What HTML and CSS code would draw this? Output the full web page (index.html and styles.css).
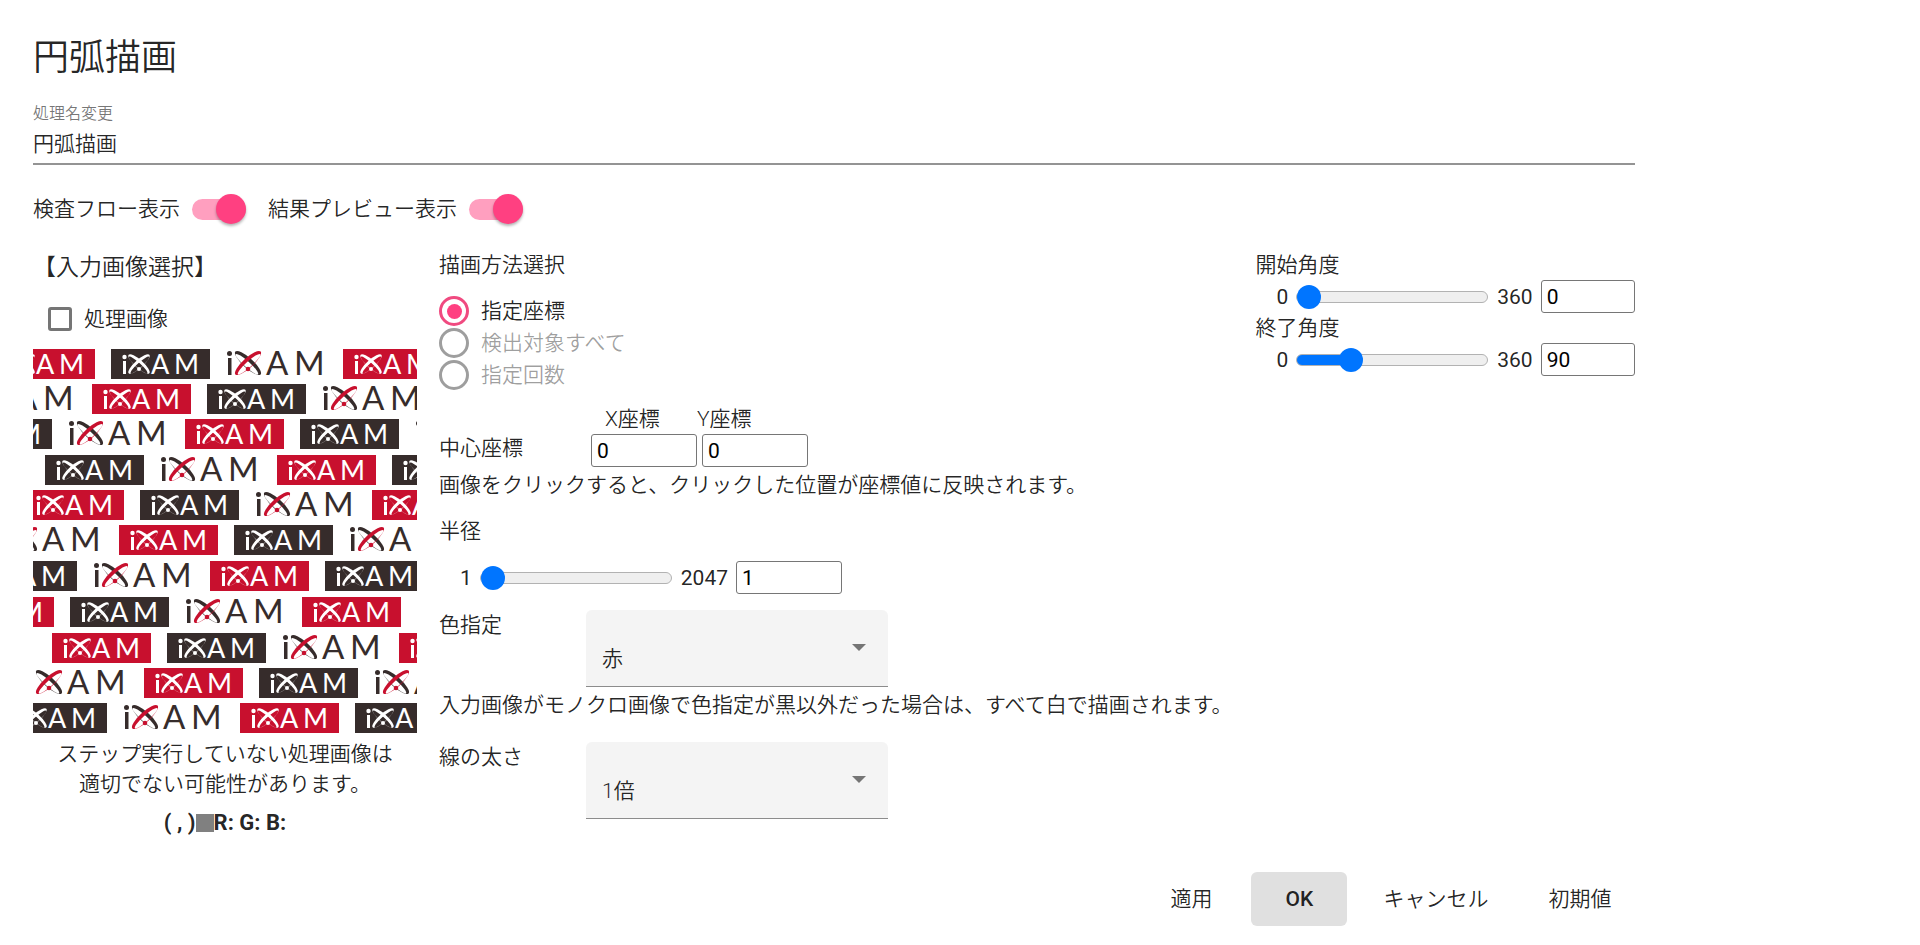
FILE: index.html
```
<!DOCTYPE html>
<html lang="ja">
<head>
    <meta charset="UTF-8">
    <meta name="viewport" content="width=device-width, initial-scale=1">
    <title>円弧描画</title>
    <link rel="stylesheet" href="styles.css">
</head>
<body>
    <main class="dialog">
        <h1 class="title">円弧描画</h1>

        <div class="name-field">
            <label for="process-name">処理名変更</label>
            <input type="text" id="process-name" value="円弧描画">
        </div>

        <div class="toggles">
            <label class="toggle">検査フロー表示<input type="checkbox" role="switch" checked></label>
            <label class="toggle">結果プレビュー表示<input type="checkbox" role="switch" checked></label>
        </div>

        <div class="columns">
            <!-- 入力画像 -->
            <section class="image-column">
                <h2>【入力画像選択】</h2>
                <label class="check"><input type="checkbox">処理画像</label>
                <svg class="preview" viewBox="0 0 384 384" role="img" aria-label="入力画像">
                    <defs>
                        <path id="orbit" fill-rule="evenodd" d="M-17 0a17 5 0 0 1 34 0a17 5 0 0 1 -34 0zM-15 1.6a15 2.9 0 0 0 30 0a15 2.9 0 0 0 -30 0z"/>
                        <g id="box-logo">
                            <circle cx="13.5" cy="8" r="2.2"/>
                            <path d="M12 12h3v13h-3z"/>
                            <use href="#orbit" transform="translate(28 15) rotate(42) scale(.82)"/>
                            <use href="#orbit" transform="translate(28 15) rotate(-42) scale(.82)"/>
                            <circle cx="28" cy="20" r="2"/>
                            <text class="logo-text" y="25" x="40 63" font-size="27">AM</text>
                        </g>
                        <g id="plain-logo" fill="#362c2b">
                            <circle cx="2.5" cy="4.5" r="2.5"/>
                            <path d="M1 9h3.5v17h-3.5z"/>
                            <use href="#orbit" transform="translate(21 14) rotate(42)"/>
                            <use href="#orbit" transform="translate(21 14) rotate(-42)" fill="#c8102e"/>
                            <circle cx="21" cy="20" r="2.3" fill="#c8102e"/>
                            <text class="logo-text" y="26" x="39 67" font-size="33">AM</text>
                        </g>
                        <g id="red-box"><rect width="99" height="30" fill="#c8102e"/><use href="#box-logo" fill="#fff"/></g>
                        <g id="dark-box"><rect width="99" height="30" fill="#362c2b"/><use href="#box-logo" fill="#fff"/></g>
                        <g id="strip">
                            <use href="#red-box"/>
                            <use href="#dark-box" x="115"/>
                            <use href="#plain-logo" x="231"/>
                            <use href="#red-box" x="347"/>
                            <use href="#dark-box" x="462"/>
                            <use href="#plain-logo" x="578"/>
                            <use href="#red-box" x="694"/>
                        </g>
                    </defs>
                    <use href="#strip" x="-37" y="0"/>
                    <use href="#strip" x="-288" y="35"/>
                    <use href="#strip" x="-195" y="70"/>
                    <use href="#strip" x="-103" y="106"/>
                    <use href="#strip" x="-8" y="141"/>
                    <use href="#strip" x="-261" y="176"/>
                    <use href="#strip" x="-170" y="212"/>
                    <use href="#strip" x="-78" y="248"/>
                    <use href="#strip" x="-328" y="284"/>
                    <use href="#strip" x="-236" y="319"/>
                    <use href="#strip" x="-140" y="354"/>
                </svg>
                <p class="caution">ステップ実行していない処理画像は<br>適切でない可能性があります。</p>
                <p class="pixel">( , )<span class="swatch"></span>R: G: B:</p>
            </section>

            <!-- 描画設定 -->
            <section class="draw-column">
                <fieldset class="method">
                    <legend>描画方法選択</legend>
                    <label class="radio"><input type="radio" name="method" checked>指定座標</label>
                    <label class="radio"><input type="radio" name="method" disabled>検出対象すべて</label>
                    <label class="radio"><input type="radio" name="method" disabled>指定回数</label>
                </fieldset>

                <div class="center">
                    <span class="row-name">中心座標</span>
                    <div class="coord">
                        <label for="center-x">X座標</label>
                        <input class="num" type="text" id="center-x" value="0">
                    </div>
                    <div class="coord">
                        <label for="center-y">Y座標</label>
                        <input class="num" type="text" id="center-y" value="0">
                    </div>
                </div>
                <p class="note">画像をクリックすると、クリックした位置が座標値に反映されます。</p>

                <label class="radius-name" for="radius">半径</label>
                <div class="slider-row radius">
                    <span>1</span>
                    <input type="range" id="radius" min="1" max="2047" value="1" style="--fill: 0%">
                    <span>2047</span>
                    <input class="num" type="text" value="1" aria-label="半径">
                </div>

                <div class="select-row">
                    <label for="color">色指定</label>
                    <div class="select">
                        <select id="color"><option>赤</option></select>
                    </div>
                </div>
                <p class="note">入力画像がモノクロ画像で色指定が黒以外だった場合は、すべて白で描画されます。</p>
                <div class="select-row line-width">
                    <label for="line-width">線の太さ</label>
                    <div class="select">
                        <select id="line-width"><option>1倍</option></select>
                    </div>
                </div>
            </section>

            <!-- 角度 -->
            <section class="angle-column">
                <label for="start-angle">開始角度</label>
                <div class="slider-row">
                    <span>0</span>
                    <input type="range" id="start-angle" min="0" max="360" value="0" style="--fill: 0%">
                    <span>360</span>
                    <input class="num" type="text" value="0" aria-label="開始角度">
                </div>
                <label for="end-angle">終了角度</label>
                <div class="slider-row">
                    <span>0</span>
                    <input type="range" id="end-angle" min="0" max="360" value="90" style="--fill: 25%">
                    <span>360</span>
                    <input class="num" type="text" value="90" aria-label="終了角度">
                </div>
            </section>
        </div>

        <div class="actions">
            <button type="button">適用</button>
            <button type="button" class="focused">OK</button>
            <button type="button">キャンセル</button>
            <button type="button">初期値</button>
        </div>
    </main>
</body>
</html>
```
FILE: styles.css
```
* {
    box-sizing: border-box;
}

body {
    margin: 0;
    background-color: #fff;
    color: rgba(0, 0, 0, 0.87);
    font-family: Roboto, "Noto Sans CJK JP", sans-serif;
    font-size: 21px;
    font-weight: 350;
    line-height: 30px;
}

input,
select,
button {
    margin: 0;
    color: inherit;
    font: inherit;
}

p,
h1,
h2 {
    margin: 0;
}

label {
    display: block;
}

.dialog {
    width: 87%;
    padding: 34px 35px 0 33px;
}

.title {
    font-size: 36px;
    font-weight: 350;
    line-height: 48px;
}

/* 処理名 */
.name-field {
    margin-top: 20px;
    border-bottom: 2px solid #949494;
}

.name-field label {
    color: rgba(0, 0, 0, 0.54);
    font-size: 16px;
    line-height: 24px;
}

.name-field input {
    display: block;
    width: 100%;
    height: 37px;
    padding: 0 0 6px;
    border: 0;
    outline: 0;
}

/* トグル */
.toggles {
    display: flex;
    gap: 22px;
    margin-top: 29px;
}

.toggle {
    display: flex;
    align-items: center;
    gap: 12px;
}

.toggle input {
    display: flex;
    align-items: center;
    justify-content: flex-end;
    width: 54px;
    height: 21px;
    border-radius: 11px;
    background-color: #ff9fbf;
    appearance: none;
}

.toggle input::before {
    content: "";
    width: 30px;
    height: 30px;
    border-radius: 50%;
    background-color: #ff4081;
    box-shadow: 0 2px 3px rgba(0, 0, 0, 0.3);
}

.columns {
    display: flex;
    align-items: flex-start;
    gap: 22px;
    margin-top: 26px;
}

/* 入力画像 */
.image-column {
    width: 384px;
}

.image-column h2 {
    font-size: 23px;
    font-weight: 350;
    line-height: 36px;
}

.check {
    display: flex;
    align-items: center;
    gap: 12px;
    margin: 18px 0 15px 15px;
}

.check input {
    width: 24px;
    height: 24px;
    border: 3px solid #757575;
    border-radius: 3px;
    appearance: none;
}

.preview {
    display: block;
    width: 100%;
    overflow: hidden;
}

.logo-text {
    font-family: Lato, sans-serif;
    font-weight: 400;
}

.caution {
    margin-top: 6px;
    text-align: center;
}

.pixel {
    display: flex;
    align-items: center;
    justify-content: center;
    margin-top: 9px;
    font-size: 22px;
    font-weight: 700;
}

.swatch {
    width: 18px;
    height: 18px;
    background-color: #808080;
}

/* 描画設定 */
.draw-column {
    flex: 1;
}

.method {
    margin: 0;
    padding: 0;
    border: 0;
}

.method legend {
    padding: 0;
    margin-bottom: 16px;
}

.radio {
    display: flex;
    align-items: center;
    gap: 12px;
    margin-bottom: 2px;
}

.radio input {
    display: grid;
    place-items: center;
    width: 30px;
    height: 30px;
    border: 3px solid #9e9e9e;
    border-radius: 50%;
    appearance: none;
}

.radio input:checked {
    border-color: #f04a80;
}

.radio input:checked::before {
    content: "";
    width: 15px;
    height: 15px;
    border-radius: 50%;
    background-color: #ff4081;
}

.radio:has(:disabled) {
    color: rgba(0, 0, 0, 0.38);
}

.num {
    width: 106px;
    height: 33px;
    padding: 0 5px;
    border: 1px solid #767676;
    border-radius: 3px;
    color: #000;
    font-weight: 400;
}

.center {
    display: flex;
    align-items: flex-end;
    gap: 5px;
    margin-top: 12px;
}

.row-name {
    width: 147px;
    margin-bottom: 4px;
}

.coord:not(:last-child) label {
    padding-left: 14px;
}

.coord:last-child label {
    margin-left: -5px;
}

.coord .num {
    display: block;
}

.note {
    margin-top: 3px;
}

.radius-name {
    margin-top: 16px;
}

.slider-row {
    display: flex;
    align-items: center;
    height: 33px;
    padding-left: 21px;
    font-weight: 400;
}

.slider-row.radius {
    margin: 15px 0 16px;
}

.slider-row input[type="range"] {
    flex: none;
    width: 192px;
    height: 24px;
    margin: 0 9px 0 8px;
    background: none;
    appearance: none;
}

.slider-row input::-webkit-slider-runnable-track {
    height: 12px;
    border: 1px solid #b2b2b2;
    border-radius: 6px;
    background: linear-gradient(#0075ff, #0075ff) 0 / var(--fill) 100% no-repeat #efefef;
}

.slider-row input::-webkit-slider-thumb {
    width: 24px;
    height: 24px;
    margin-top: -7px;
    border-radius: 50%;
    background-color: #0075ff;
    appearance: none;
}

.slider-row .num {
    margin-left: 8px;
}

.select-row {
    display: flex;
    align-items: flex-start;
}

.select-row label {
    width: 147px;
}

.select {
    position: relative;
    width: 302px;
}

.select select {
    display: block;
    width: 100%;
    height: 77px;
    padding: 22px 40px 0 16px;
    border: 0;
    border-bottom: 1px solid #8c8c8c;
    border-radius: 6px 6px 0 0;
    background-color: #f4f4f4;
    appearance: none;
}

.select::after {
    content: "";
    position: absolute;
    top: 34px;
    right: 22px;
    border: 7px solid transparent;
    border-top-color: #757575;
    border-bottom: 0;
    pointer-events: none;
}

.line-width {
    margin-top: 22px;
}

/* 角度 */
.angle-column {
    width: 380px;
}

.angle-column .num {
    flex: 1;
    min-width: 0;
}

/* ボタン */
.actions {
    display: flex;
    justify-content: flex-end;
    gap: 12px;
    margin-top: 34px;
}

.actions button {
    min-width: 96px;
    height: 54px;
    padding: 0 24px;
    border: 0;
    border-radius: 6px;
    background: none;
}

.actions .focused {
    background-color: #e0e0e0;
    font-weight: 500;
}
```
